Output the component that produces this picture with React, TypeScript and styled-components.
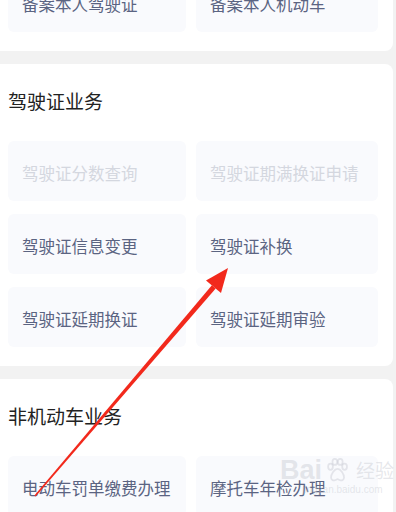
import React from "react";
import styled, { createGlobalStyle } from "styled-components";

const Global = createGlobalStyle`
  html, body { margin: 0; padding: 0; background: #f2f2f2; }
  body { font-family: "Noto Sans CJK SC", "Noto Sans", sans-serif; overflow: hidden; }
  #root { width: 396px; height: 512px; overflow: hidden; }
`;

const Page = styled.div`
  position: relative;
  width: 396px;
  height: 512px;
  overflow: hidden;
  background: #f2f2f2;
  display: flex;
  flex-direction: column;
  gap: 13px;
`;

const Card = styled.section<{ $top?: number }>`
  margin: ${(p) => (p.$top ? `${p.$top}px` : "0")} 3px 0 -10px;
  padding: 0 15px 19px 18px;
  background: #fff;
  border-radius: 8px;
  display: flex;
  flex-direction: column;
`;

const Title = styled.h2`
  margin: 0;
  padding: 24px 0 27px;
  height: 26px;
  line-height: 26px;
  font-size: 19px;
  font-weight: 400;
  color: #222;
  box-sizing: content-box;
`;

const Grid = styled.div`
  display: grid;
  grid-template-columns: 178px 182px;
  column-gap: 10px;
  row-gap: 13px;
`;

const Tile = styled.div<{ $disabled?: boolean }>`
  height: 60px;
  box-sizing: border-box;
  padding: 3px 0 0 14px;
  border-radius: 6px;
  background: #f9fafd;
  display: flex;
  align-items: center;
  font-size: 16.5px;
  color: ${(p) => (p.$disabled ? "#d4d7df" : "#5b6482")};
  white-space: nowrap;
`;

const Overlay = styled.svg`
  position: absolute;
  left: 0;
  top: 0;
  pointer-events: none;
`;

const Watermark = styled.div`
  position: absolute;
  left: 280px;
  top: 455px;
  display: flex;
  flex-direction: column;
  align-items: flex-start;
  color: rgba(200, 202, 210, 0.45);
  pointer-events: none;
`;

const WmRow = styled.div`
  display: flex;
  align-items: center;
  gap: 2px;
  font-family: "Liberation Sans", sans-serif;
  font-size: 27px;
  font-weight: 700;
  line-height: 30px;
`;

const WmCn = styled.span`
  font-family: "Noto Sans CJK SC", sans-serif;
  font-size: 19px;
  font-weight: 400;
  margin-left: 4px;
`;

const WmUrl = styled.div`
  font-family: "Liberation Sans", sans-serif;
  font-size: 10px;
  margin-left: 22px;
  margin-top: -1px;
`;

type Item = { label: string; disabled?: boolean };

const TileGrid = ({ items }: { items: Item[] }) => (
  <Grid>
    {items.map((it) => (
      <Tile key={it.label} $disabled={it.disabled}>
        {it.label}
      </Tile>
    ))}
  </Grid>
);

export default function App() {
  return (
    <>
      <Global />
      <Page>
        <Card $top={-28}>
          <TileGrid items={[{ label: "备案本人驾驶证" }, { label: "备案本人机动车" }]} />
        </Card>
        <Card>
          <Title>驾驶证业务</Title>
          <TileGrid
            items={[
              { label: "驾驶证分数查询", disabled: true },
              { label: "驾驶证期满换证申请", disabled: true },
              { label: "驾驶证信息变更" },
              { label: "驾驶证补换" },
              { label: "驾驶证延期换证" },
              { label: "驾驶证延期审验" },
            ]}
          />
        </Card>
        <Card>
          <Title>非机动车业务</Title>
          <TileGrid items={[{ label: "电动车罚单缴费办理" }, { label: "摩托车年检办理" }]} />
        </Card>
        <Watermark>
          <WmRow>
            Bai
            <svg width="26" height="26" viewBox="0 0 24 24">
              <g fill="none" stroke="currentColor" strokeWidth="1.6">
                <ellipse cx="6" cy="9" rx="2.2" ry="2.8" />
                <ellipse cx="10" cy="4.5" rx="2.2" ry="2.8" />
                <ellipse cx="15" cy="4.5" rx="2.2" ry="2.8" />
                <ellipse cx="19" cy="9" rx="2.2" ry="2.8" />
                <path d="M12.5 11c-3 0-6 5-6 8 0 2 2 3 3.5 2.5s2-1 2.5-1 1 .5 2.5 1 3.5-.5 3.5-2.5c0-3-3-8-6-8z" />
              </g>
            </svg>
            <WmCn>经验</WmCn>
          </WmRow>
          <WmUrl>jingyan.baidu.com</WmUrl>
        </Watermark>
        <Overlay width="396" height="512" viewBox="0 0 396 512">
          <polygon
            points="34.4,495.5 35.6,496.5 215.7,288.4 211.9,285.2"
            fill="#f2291c"
          />
          <polygon points="228,268 221,293 206,280.5" fill="#f2291c" />
        </Overlay>
      </Page>
    </>
  );
}
